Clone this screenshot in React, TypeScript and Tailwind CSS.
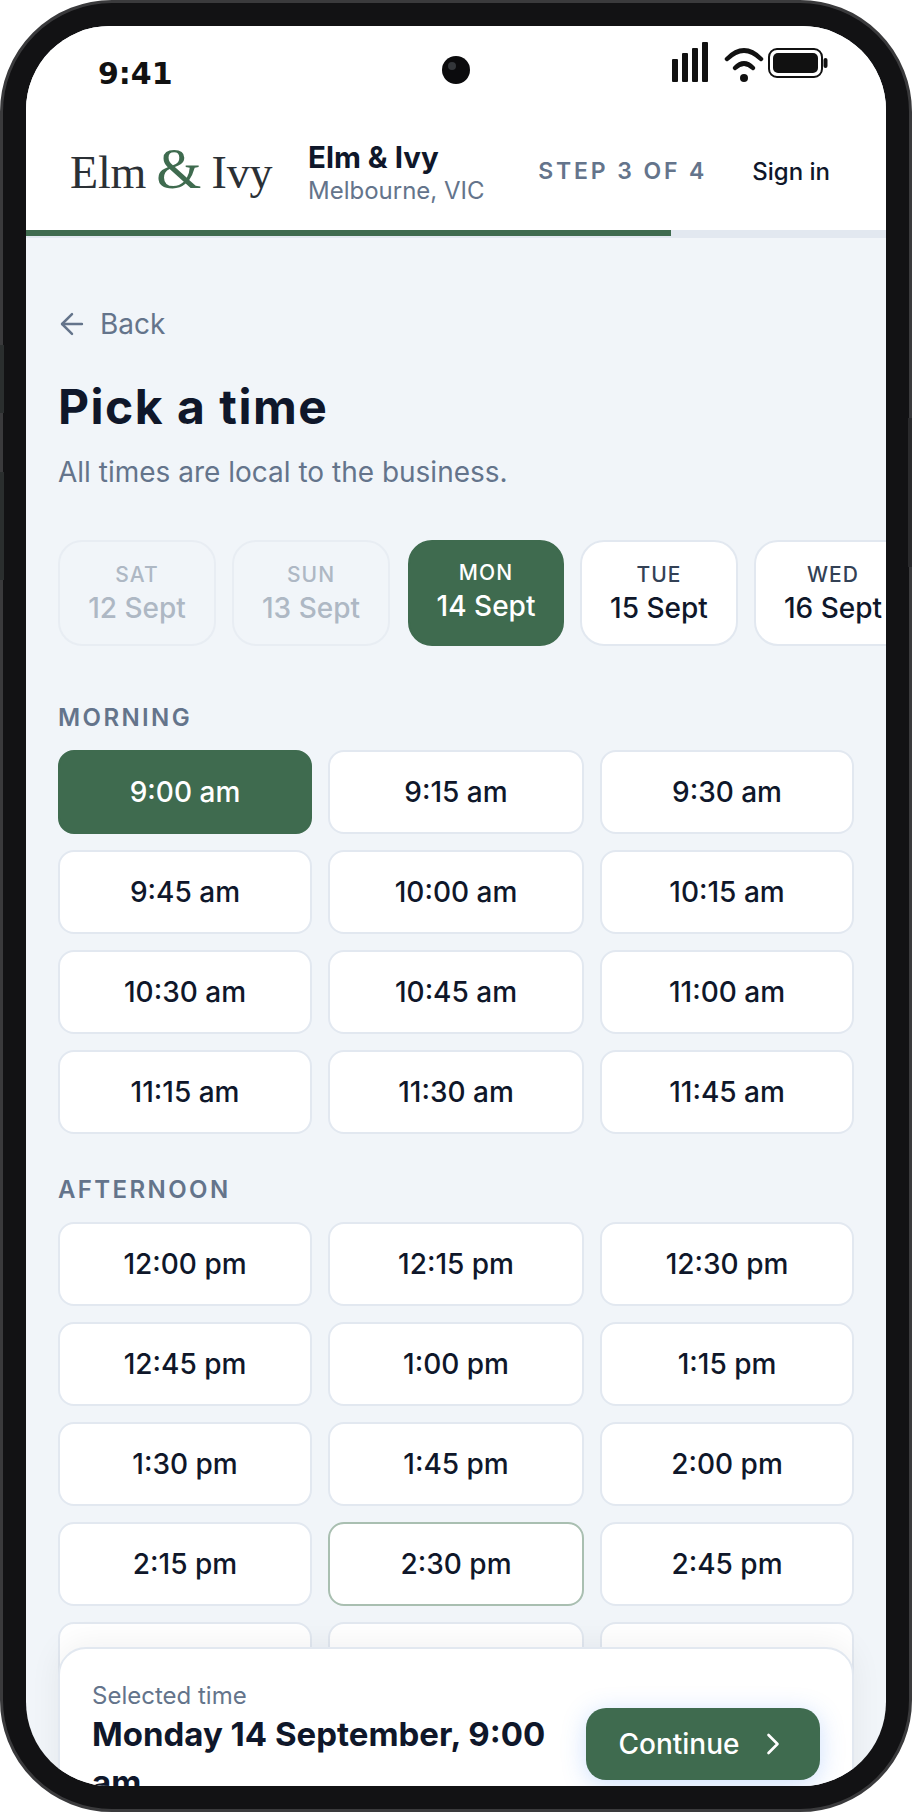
import { ArrowLeft, ChevronRight } from "lucide-react"

const morning = ["9:00 am", "9:15 am", "9:30 am", "9:45 am", "10:00 am", "10:15 am", "10:30 am", "10:45 am", "11:00 am", "11:15 am", "11:30 am", "11:45 am"]
const afternoon = ["12:00 pm", "12:15 pm", "12:30 pm", "12:45 pm", "1:00 pm", "1:15 pm", "1:30 pm", "1:45 pm", "2:00 pm", "2:15 pm", "2:30 pm", "2:45 pm", "3:00 pm", "3:15 pm", "3:30 pm"]

const days = [
  { day: "SAT", date: "12 Sept", state: "off" },
  { day: "SUN", date: "13 Sept", state: "off" },
  { day: "MON", date: "14 Sept", state: "on" },
  { day: "TUE", date: "15 Sept", state: "" },
  { day: "WED", date: "16 Sept", state: "" },
]

const StatusIcons = () => (
  <svg width="158" height="42" viewBox="0 0 158 42" className="block">
    <rect x="2" y="17" width="6" height="23" rx="1" fill="#111" />
    <rect x="12" y="11" width="6" height="29" rx="1" fill="#111" />
    <rect x="22" y="6" width="6" height="34" rx="1" fill="#111" />
    <rect x="32" y="0" width="6" height="40" rx="1" fill="#111" />
    <path d="M57 17 Q74 0 91 17" fill="none" stroke="#111" strokeWidth="4.5" strokeLinecap="round" />
    <path d="M65 26 Q74 17 83 26" fill="none" stroke="#111" strokeWidth="4.5" strokeLinecap="round" />
    <circle cx="74" cy="36" r="4" fill="#111" />
    <rect x="99" y="7" width="53" height="28" rx="8" fill="none" stroke="#111" strokeWidth="2" />
    <rect x="103" y="11" width="45" height="20" rx="5" fill="#111" />
    <rect x="153.5" y="16" width="4" height="10" rx="2" fill="#111" />
  </svg>
)

const TimeSlot = ({ label, selected, hover }: { label: string; selected?: boolean; hover?: boolean }) => (
  <button
    className={`h-[84px] rounded-[16px] border-2 text-[28px] font-medium ${
      selected
        ? "border-[#3f6b4f] bg-[#3f6b4f] text-white"
        : hover
          ? "border-[#a9bfb1] bg-white text-[#0f172a]"
          : "border-[#e2e8f0] bg-white text-[#0f172a]"
    }`}
  >
    {label}
  </button>
)

export default function App() {
  return (
    <div className="relative h-[1812px] w-[912px] bg-white font-['Inter',sans-serif]">
      <div className="relative h-full w-full rounded-[112px] border-[3px] border-[#3a3a3c] bg-[#121214] p-[23px]">
        <div className="relative flex h-full w-full flex-col overflow-hidden rounded-[84px] bg-[#f1f5f9]">
          <div className="bg-white">
            <div className="relative flex h-[86px] items-start justify-between pl-[72px] pr-[58px] pt-[16px]">
              <span className="mt-[14px] font-['DejaVu_Sans',sans-serif] text-[30px] font-bold leading-[36px] text-[#111]">9:41</span>
              <div className="absolute left-[416px] top-[30px] h-[28px] w-[28px] rounded-full bg-[#0b0b0d]">
                <div className="ml-[6px] mt-[6px] h-[8px] w-[8px] rounded-full bg-[#33363a]" />
              </div>
              <StatusIcons />
            </div>
            <header className="flex h-[118px] items-center pl-[44px] pr-[56px]">
              <div className="w-[238px] whitespace-nowrap font-['Liberation_Serif',serif] text-[46px] leading-[60px] tracking-[-0.2px] text-[#2b3035] [word-spacing:-1px]">
                Elm <span className="text-[58px] text-[#3f6b4f]">&amp;</span> Ivy
              </div>
              <div className="flex-1 pt-[4px]">
                <div className="text-[29.5px] font-bold leading-[36px] text-[#0f172a]">Elm &amp; Ivy</div>
                <div className="text-[24px] leading-[32px] text-[#64748b]">Melbourne, VIC</div>
              </div>
              <span className="mr-[45px] pt-[1px] text-[23px] font-semibold tracking-[0.125em] text-[#64748b]">STEP 3 OF 4</span>
              <span className="pt-[1px] text-[24px] font-medium text-[#0f172a]">Sign in</span>
            </header>
            <div className="h-[8px] border-b-2 border-[#e2e8f0] bg-[#e2e8f0]">
              <div className="h-[6px] w-3/4 bg-[#3f6b4f]" />
            </div>
          </div>

          <main className="flex-1 px-[32px] pt-[68px]">
            <div className="flex items-center gap-[11px] text-[28px] leading-[36px] text-[#64748b]">
              <ArrowLeft size={34} strokeWidth={1.75} className="-ml-[3px]" />
              Back
            </div>
            <h1 className="mt-[36px] text-[48px] font-bold leading-[58px] tracking-[1.5px] text-[#0f172a]">Pick a time</h1>
            <p className="mt-[18px] text-[28px] leading-[36px] text-[#64748b]">All times are local to the business.</p>

            <div className="-mr-[32px] mt-[50px] flex gap-[16px] overflow-hidden">
              {days.map((d) => (
                <div
                  key={d.day}
                  className={`flex h-[106px] shrink-0 flex-col items-center justify-center rounded-[24px] border-2 ${
                    d.state === "on"
                      ? "ml-[2px] w-[156px] border-[#3f6b4f] bg-[#3f6b4f] pb-[4px] text-white"
                      : d.state === "off"
                        ? "w-[158px] border-[#e8edf3] bg-[#f1f5f9] text-[#aeb8c4]"
                        : "w-[158px] border-[#e2e8f0] bg-white text-[#0f172a]"
                  }`}
                >
                  <span className={`text-[21px] font-medium leading-[30px] tracking-[0.05em] ${d.state === "" ? "text-[#334155]" : ""}`}>{d.day}</span>
                  <span className="text-[28px] font-medium leading-[36px]">{d.date}</span>
                </div>
              ))}
            </div>

            <h2 className="mt-[57px] text-[24px] font-semibold leading-[30px] tracking-[0.1em] text-[#64748b]">MORNING</h2>
            <div className="mt-[17px] grid grid-cols-[254px_256px_254px] gap-[16px]">
              {morning.map((t) => (
                <TimeSlot key={t} label={t} selected={t === "9:00 am"} />
              ))}
            </div>

            <h2 className="mt-[41px] text-[24px] font-semibold leading-[30px] tracking-[0.1em] text-[#64748b]">AFTERNOON</h2>
            <div className="mt-[17px] grid grid-cols-[254px_256px_254px] gap-[16px]">
              {afternoon.map((t) => (
                <TimeSlot key={t} label={t} hover={t === "2:30 pm"} />
              ))}
            </div>
          </main>

          <div className="absolute left-[32px] right-[32px] top-[1621px] flex h-[170px] items-start justify-between rounded-t-[28px] border-2 border-[#e2e8f0] bg-white px-[32px] pt-[31px] shadow-[0_-4px_32px_rgba(15,23,42,0.06)]">
            <div className="w-[470px]">
              <div className="text-[24px] leading-[32px] text-[#64748b]">Selected time</div>
              <div className="-mt-[2px] text-[33px] font-bold leading-[48px] text-[#0f172a]">Monday 14 September, 9:00 am</div>
            </div>
            <button className="mt-[28px] flex h-[72px] w-[234px] shrink-0 items-center justify-center gap-[15px] rounded-[20px] bg-[#3f6b4f] pl-[3px] text-[28px] font-medium text-white shadow-[0_4px_24px_rgba(59,130,246,0.25)]">
              Continue
              <ChevronRight size={36} strokeWidth={1.75} />
            </button>
          </div>
        </div>
      </div>
      <div className="absolute left-0 top-[345px] h-[68px] w-[4px] bg-[#2a2e2e]" />
      <div className="absolute left-0 top-[472px] h-[108px] w-[4px] bg-[#2a2e2e]" />
      <div className="absolute right-0 top-[418px] h-[149px] w-[4px] bg-[#2a2a2c]" />
    </div>
  )
}
